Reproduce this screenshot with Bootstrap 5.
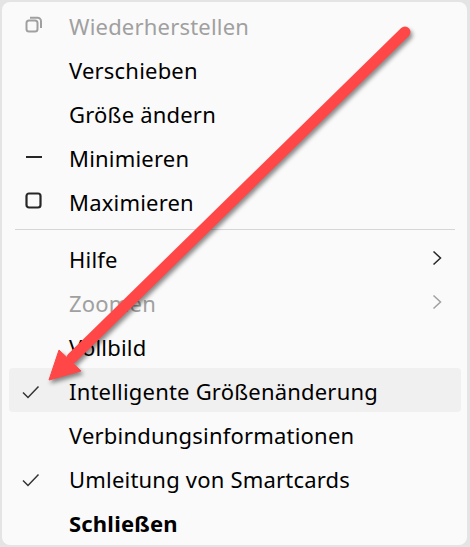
<!DOCTYPE html>
<html lang="de">
  <head>
    <meta charset="UTF-8" />
    <title>Systemmenü</title>
    <link href="https://cdn.jsdelivr.net/npm/bootstrap@5.3.0/dist/css/bootstrap.min.css" rel="stylesheet" />
    <style>
      html, body { height: 547px; overflow: hidden; }
      body { background: #e4e4e4; font-family: "Noto Sans", "Open Sans", sans-serif; }
      .stage { width: 470px; height: 547px; padding: 2px 3px 2px 2px; background: #e4e4e4; }
      .menu-panel { height: 543px; background: #fafafa; border-radius: 8px; padding: 0 6px 0 7px; }
      .menu-row { height: 44px; flex: none; padding-top: 4px; border-radius: 4px; color: #000; font-size: 22px; letter-spacing: .2px; line-height: 1; }
      .menu-rule ~ .menu-row { padding-top: 2px; }
      .menu-row.off { color: #a0a0a0; }
      .menu-row.hot { background: #f0f0f0; }
      .menu-row.strong { font-weight: 700; }
      .slot { width: 60px; flex: none; padding-left: 16px; }
      .slot svg { display: block; margin-bottom: 2px; }
      .more svg { display: block; margin-bottom: 2px; }
      .slot.tick { padding-left: 13px; }
      .slot.tick svg { margin: 2px 0 0; }
      .more { margin-right: 19px; }
      .menu-rule { height: 14px; flex: none; padding: 7px 6px 0; }
      .menu-rule div { height: 1px; background: #d6d6d6; }
      .overlay { position: absolute; left: 0; top: 0; width: 470px; height: 547px; pointer-events: none; filter: drop-shadow(2px 3px 2px rgba(0,0,0,.45)); }
    </style>
  </head>
  <body class="position-relative">
    <div class="stage">
      <div class="menu-panel d-flex flex-column">
        <div class="menu-row off d-flex align-items-center">
          <span class="slot"><svg width="18" height="18" viewBox="0 0 18 18" fill="none" stroke="#a0a0a0" stroke-width="2"><rect x="1.5" y="4.5" width="11" height="11" rx="2.5"/><path d="M5 1.8h7.5a3.5 3.5 0 0 1 3.5 3.5V12"/></svg></span>
          <span>Wiederherstellen</span>
        </div>
        <div class="menu-row d-flex align-items-center"><span class="slot"></span><span>Verschieben</span></div>
        <div class="menu-row d-flex align-items-center"><span class="slot"></span><span>Größe ändern</span></div>
        <div class="menu-row d-flex align-items-center">
          <span class="slot"><svg width="18" height="18" viewBox="0 0 18 18" fill="none" stroke="#262626" stroke-width="2"><path d="M1 9h16"/></svg></span>
          <span>Minimieren</span>
        </div>
        <div class="menu-row d-flex align-items-center">
          <span class="slot"><svg width="18" height="18" viewBox="0 0 18 18" fill="none" stroke="#262626" stroke-width="2.2"><rect x="1.5" y="1.5" width="14" height="14" rx="2.5"/></svg></span>
          <span>Maximieren</span>
        </div>
        <div class="menu-rule"><div></div></div>
        <div class="menu-row d-flex align-items-center justify-content-between">
          <span class="d-flex align-items-center"><span class="slot"></span><span>Hilfe</span></span>
          <span class="more"><svg width="10" height="16" viewBox="0 0 10 16" fill="none" stroke="#262626" stroke-width="1.5"><path d="M1.5 1.5 8.5 8l-7 6.5"/></svg></span>
        </div>
        <div class="menu-row off d-flex align-items-center justify-content-between">
          <span class="d-flex align-items-center"><span class="slot"></span><span>Zoomen</span></span>
          <span class="more"><svg width="10" height="16" viewBox="0 0 10 16" fill="none" stroke="#a0a0a0" stroke-width="1.5"><path d="M1.5 1.5 8.5 8l-7 6.5"/></svg></span>
        </div>
        <div class="menu-row d-flex align-items-center"><span class="slot"></span><span>Vollbild</span></div>
        <div class="menu-row hot d-flex align-items-center">
          <span class="slot tick"><svg width="18" height="14" viewBox="0 0 18 14" fill="none" stroke="#333" stroke-width="1.5"><path d="M1 7.5 6 12.5 16.5 1.5"/></svg></span>
          <span>Intelligente Größenänderung</span>
        </div>
        <div class="menu-row d-flex align-items-center"><span class="slot"></span><span>Verbindungsinformationen</span></div>
        <div class="menu-row d-flex align-items-center">
          <span class="slot tick"><svg width="18" height="14" viewBox="0 0 18 14" fill="none" stroke="#333" stroke-width="1.5"><path d="M1 7.5 6 12.5 16.5 1.5"/></svg></span>
          <span>Umleitung von Smartcards</span>
        </div>
        <div class="menu-row strong d-flex align-items-center"><span class="slot"></span><span>Schließen</span></div>
      </div>
    </div>
    <svg class="overlay" viewBox="0 0 470 547">
      <path d="M405 32 72 358" fill="none" stroke="#ff4747" stroke-width="11" stroke-linecap="round"/>
      <path d="M49 380 59 350 81 371Z" fill="#ff4747" stroke="#ff4747" stroke-width="1" stroke-linejoin="round"/>
    </svg>
    <script src="https://cdn.jsdelivr.net/npm/bootstrap@5.3.0/dist/js/bootstrap.bundle.min.js"></script>
  </body>
</html>
